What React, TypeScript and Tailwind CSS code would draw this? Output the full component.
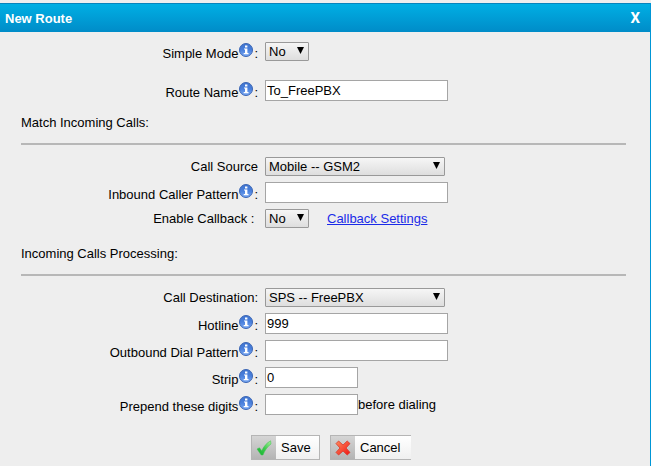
import { useState } from "react";
import type { ReactNode } from "react";

function InfoIcon() {
  return (
    <svg viewBox="0 0 16 16" className="mb-2 h-4 w-4 shrink-0" aria-hidden="true">
      <defs>
        <linearGradient id="infoFill" x1="0" y1="0" x2="0" y2="1">
          <stop offset="0" stopColor="#3f74cf" />
          <stop offset="0.5" stopColor="#4a80dc" />
          <stop offset="1" stopColor="#79a9f5" />
        </linearGradient>
      </defs>
      <circle cx="8" cy="8" r="6.5" fill="url(#infoFill)" stroke="#3c66b4" />
      <path d="M7 3.4h2.4v2H7zM6 6.4h3.4V11h1.1v1.300H5.700V11H7V7.600H6z" fill="#fff" />
    </svg>
  );
}

type RowProps = {
  id: string;
  label: string;
  colon?: string;
  info?: boolean;
  children: ReactNode;
};

function Row({ id, label, colon = "", info = false, children }: RowProps) {
  return (
    <div className="flex items-center gap-[7px]">
      <label
        htmlFor={id}
        className={
          info
            ? "flex h-[19px] w-[258px] shrink-0 items-center justify-end pt-1"
            : "flex h-[19px] w-[258px] shrink-0 items-center justify-end whitespace-pre"
        }
      >
        {label}
        {info && <InfoIcon />}
        {info ? <span>:</span> : colon}
      </label>
      <div className="flex items-center">{children}</div>
    </div>
  );
}

type SelectProps = { id: string; value: string; wide?: boolean };

function Select({ id, value, wide = false }: SelectProps) {
  return (
    <div className={wide ? "relative w-[180px]" : "relative w-11"}>
      <select
        id={id}
        defaultValue={value}
        className="block h-[19px] w-full appearance-none rounded-[1px] border border-[#999] bg-linear-to-b from-[#f6f6f6] to-[#dedede] pl-[3px] leading-4 text-black"
      >
        <option>{value}</option>
      </select>
      <svg
        viewBox="0 0 7 7"
        className="pointer-events-none absolute top-[5px] right-[5px] h-[7px] w-[7px]"
        aria-hidden="true"
      >
        <path d="M0 0h7L3.500 7z" fill="#000" />
      </svg>
    </div>
  );
}

type FieldProps = { id: string; value?: string; short?: boolean };

function Field({ id, value = "", short = false }: FieldProps) {
  const [text, setText] = useState(value);
  return (
    <input
      id={id}
      type="text"
      value={text}
      onChange={(e) => setText(e.target.value)}
      className={
        short
          ? "h-[21px] w-[93px] border border-[#a5a5a5] bg-white px-px text-black"
          : "h-[21px] w-[183px] border border-[#a5a5a5] bg-white px-px text-black"
      }
    />
  );
}

function SectionTitle({ children }: { children: ReactNode }) {
  return (
    <h2 className="mr-6 ml-[21px] border-b-2 border-[#b7b7b7] pb-2.5 leading-5">{children}</h2>
  );
}

function CheckIcon() {
  return (
    <svg viewBox="0 0 16 16" className="h-4 w-4" aria-hidden="true">
      <defs>
        <linearGradient id="checkFill" x1="1" y1="0" x2="0" y2="1">
          <stop offset="0" stopColor="#a8f09a" />
          <stop offset="0.5" stopColor="#3ccb4b" />
          <stop offset="1" stopColor="#0fae2c" />
        </linearGradient>
      </defs>
      <path
        d="M1 9 3.500 7.800l2.300 3C7.600 6.600 10 3.400 14.600.8L15 4C11 7 8.800 10.600 7 15H5.200z"
        fill="url(#checkFill)"
        stroke="#3fc050"
        strokeWidth="0.5"
      />
    </svg>
  );
}

function CrossIcon() {
  return (
    <svg viewBox="0 0 16 16" className="h-4 w-4" aria-hidden="true">
      <defs>
        <linearGradient id="crossFill" x1="0" y1="0" x2="1" y2="1">
          <stop offset="0" stopColor="#ff8a5c" />
          <stop offset="1" stopColor="#f01414" />
        </linearGradient>
      </defs>
      <path
        d="M3.600 1 8 5l4.200-4L15 3.600 11 8l4 4.400-2.800 2.600L8 11l-4.400 4L1 12.400 5 8 1 3.600z"
        fill="url(#crossFill)"
        stroke="#d8392b"
        strokeWidth="0.8"
        strokeLinejoin="round"
      />
    </svg>
  );
}

export default function App() {
  return (
    <div className="min-h-screen bg-[#eee] pt-[3px] font-['Liberation_Sans',Arial,sans-serif] text-[13px] leading-[19px] text-black">
      <main className="flex min-h-[calc(100vh-3px)] flex-col border-r border-[#0096d6]">
        <header className="flex h-[29px] items-center justify-between border-t border-[#0784bd] bg-linear-to-b from-[#00afe4] to-[#008cc8] pr-2.5 pl-[5px] font-bold text-white">
          <h1>New Route</h1>
          <button
            type="button"
            aria-label="Close"
            className="font-[Roboto,sans-serif] text-[15px]"
          >
            X
          </button>
        </header>

        <form className="pt-2.5" onSubmit={(e) => e.preventDefault()}>
          <div className="flex flex-col gap-[19px]">
            <Row id="mode" label="Simple Mode" info>
              <Select id="mode" value="No" />
            </Row>
            <Row id="name" label="Route Name" info>
              <Field id="name" value="To_FreePBX" />
            </Row>
          </div>

          <section className="pt-3">
            <SectionTitle>Match Incoming Calls:</SectionTitle>
            <div className="flex flex-col gap-1.5 pt-3">
              <Row id="source" label="Call Source">
                <Select id="source" value="Mobile -- GSM2" wide />
              </Row>
              <Row id="inbound" label="Inbound Caller Pattern" info>
                <Field id="inbound" />
              </Row>
              <Row id="callback" label="Enable Callback" colon=" : ">
                <Select id="callback" value="No" />
                <a href="#callback" className="ml-[18px] text-[#1a2be8] underline">
                  Callback Settings
                </a>
              </Row>
            </div>
          </section>

          <section className="pt-4">
            <SectionTitle>Incoming Calls Processing:</SectionTitle>
            <div className="flex flex-col gap-1.5 pt-3">
              <Row id="destination" label="Call Destination" colon=":">
                <Select id="destination" value="SPS -- FreePBX" wide />
              </Row>
              <Row id="hotline" label="Hotline" info>
                <Field id="hotline" value="999" />
              </Row>
              <Row id="outbound" label="Outbound Dial Pattern" info>
                <Field id="outbound" />
              </Row>
              <Row id="strip" label="Strip" info>
                <Field id="strip" value="0" short />
              </Row>
              <Row id="prepend" label="Prepend these digits" info>
                <Field id="prepend" short />
                <span>before dialing</span>
              </Row>
            </div>
          </section>

          <div className="flex justify-center gap-2.5 pt-5 pl-3">
            <button
              type="submit"
              className="flex h-[25px] w-[69px] border border-[#b5b5b5] bg-linear-to-b from-white to-[#f0f0f0]"
            >
              <span className="flex h-full w-6 items-center justify-center bg-linear-to-b from-[#d5d5d5] to-[#b4b4b4]">
                <CheckIcon />
              </span>
              <span className="flex h-full flex-1 items-center pl-[5px]">Save</span>
            </button>
            <button
              type="button"
              className="flex h-[25px] w-[81px] border border-r-0 border-[#b5b5b5] bg-linear-to-b from-white to-[#f0f0f0]"
            >
              <span className="flex h-full w-6 items-center justify-center bg-linear-to-b from-[#d5d5d5] to-[#b4b4b4]">
                <CrossIcon />
              </span>
              <span className="flex h-full flex-1 items-center pl-[5px]">Cancel</span>
            </button>
          </div>
        </form>
      </main>
    </div>
  );
}
